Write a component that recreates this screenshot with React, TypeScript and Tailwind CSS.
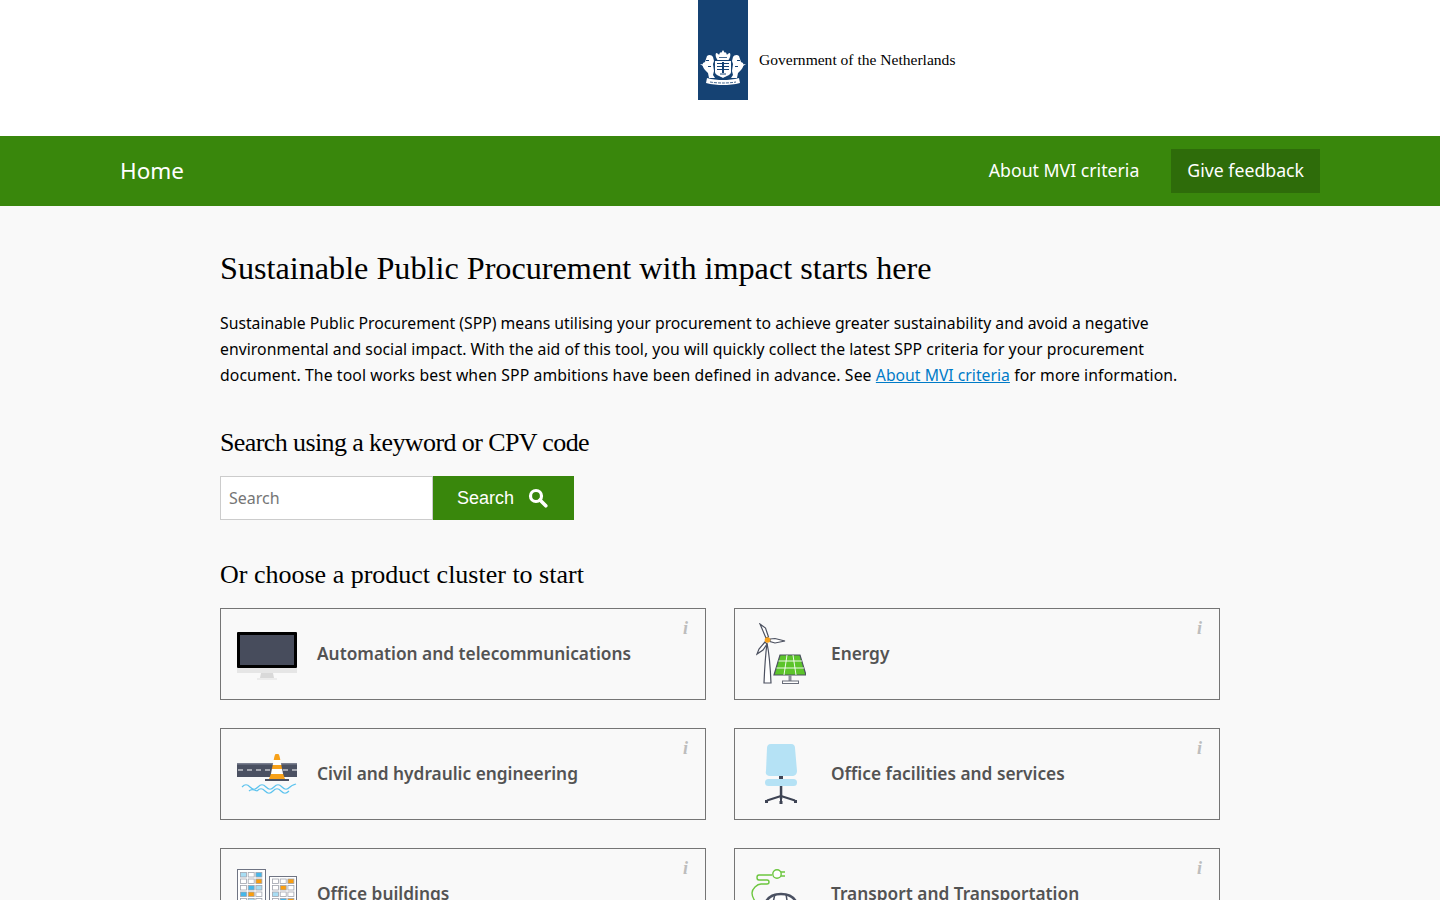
import React from 'react';

const sans = 'font-["Noto_Sans",sans-serif]';
const serif = 'font-["Liberation_Serif",serif]';

const Crest = () => (
  <svg width="46" height="36" viewBox="0 0 46 36" fill="#fff">
    {/* crown */}
    <path d="M16 4c1.500 0 2.500 1 3 2l1-2.500h1.500L23 1l1.500 2.500H26L27 6c.5-1 1.500-2 3-2 1 2 0 5-1.500 7h-11C16 9 15 6 16 4z" />
    <path d="M19 8.500h8" stroke="#154273" strokeWidth="0.8" />
    {/* shield */}
    <path d="M15 12h16v11c0 3-5 4-8 6-3-2-8-3-8-6z" />
    <path d="M17 14.500h5M24 14.500h5M17 17.500h5M24 17.500h5M17 20.500h5M24 20.500h5M20 25h6" stroke="#154273" strokeWidth="1" />
    <path d="M22 13h2v11h-2z" fill="#154273" />
    {/* lions */}
    <path d="M7 7c2-2 5-1 6 1l1 4-1 3 1 7-1 4 2 3H9l-1-5-3-3c-2-2-3-5-2-7l2-1 1-3z" />
    <path d="M39 7c-2-2-5-1-6 1l-1 4 1 3-1 7 1 4-2 3h6l1-5 3-3c2-2 3-5 2-7l-2-1-1-3z" />
    <path d="M0 15l4 .5-1 1.500zM46 15l-4 .5 1 1.500z" />
    <path d="M6 11h3v1H6zM37 11h3v1h-3zM8 17h3v1H8zM35 17h3v1h-3z" fill="#154273" />
    {/* ribbon */}
    <path d="M7 29c5 1.500 11 2 16 2s11-.5 16-2l1 5c-5 1.500-12 2-17 2s-12-.5-17-2z" />
    <path d="M10 33c4 .7 9 1 13 1s9-.3 13-1" fill="none" stroke="#154273" strokeWidth="0.8" strokeDasharray="3 1" />
  </svg>
);

const SearchGlyph = () => (
  <svg width="20" height="20" viewBox="0 0 20 20" fill="none" stroke="#fff">
    <circle cx="8" cy="8" r="5.500" strokeWidth="3.200" />
    <path d="M12 12l5.800 5.800" strokeWidth="3.600" strokeLinecap="round" />
  </svg>
);

const InfoMark = () => (
  <span className='absolute top-[9px] right-[17px] font-["Liberation_Serif",serif] italic font-bold text-[18px] leading-[20px] text-[#bdbdbd]'>i</span>
);

const ImacIcon = () => (
  <svg className="mt-1" width="60" height="48" viewBox="0 0 60 48">
    <rect x="0" y="0" width="60" height="36" rx="1" fill="#000" />
    <rect x="3" y="3" width="54" height="30" fill="#474c5c" />
    <rect x="0" y="36" width="60" height="5" fill="#e6e6e6" />
    <path d="M24 41h12l1 5H23z" fill="#d9d9d9" />
    <rect x="20" y="46" width="20" height="2" fill="#ececec" />
  </svg>
);

const EnergyIcon = () => (
  <svg width="50" height="62" viewBox="0 0 50 62">
    {/* turbine */}
    <path d="M11 20c-1.500 12-2.500 28-3 40h7c-.5-12-1.500-28-4-40z" fill="#fff" stroke="#4c5160" strokeWidth="1.200" />
    <path d="M10 15L4 1l5.500 4 3 9z" fill="#fff" stroke="#4c5160" strokeWidth="1.200" />
    <path d="M14 16l5-.5 10 2.500-10 2-5-1.500z" fill="#fff" stroke="#4c5160" strokeWidth="1.200" />
    <path d="M9 19l-6 7-2 5 6-4 4-6z" fill="#fff" stroke="#4c5160" strokeWidth="1.200" />
    <circle cx="11.500" cy="17" r="2.800" fill="#f7a11a" />
    {/* solar panel */}
    <path d="M24 32h20l6 20H18z" fill="#5cc42b" stroke="#4c5160" strokeWidth="1.200" />
    <path d="M31 32l-3 20M37 32l3 20M22.500 38h23.500M20.500 45h27.500" stroke="#fff" strokeWidth="0.9" fill="none" />
    <path d="M32.500 52h3v6h-3z" fill="#8a8e99" />
    <rect x="26.500" y="58" width="16" height="2.500" fill="#fff" stroke="#6a6e7a" strokeWidth="1" />
  </svg>
);

const RoadIcon = () => (
  <svg width="60" height="40" viewBox="0 0 60 40">
    <rect x="0" y="9" width="60" height="14" fill="#4b5162" />
    <rect x="0" y="9" width="60" height="1.500" fill="#7c8191" />
    <path d="M1 16h60" stroke="#fff" strokeWidth="1.200" strokeDasharray="5 4" />
    <path d="M38.500 0h3c.8 1 1.300 3 1.800 6h-6.600c.5-3 1-5 1.800-6z" fill="#f7a11a" />
    <path d="M36.700 6h6.600l1 5h-8.600z" fill="#fff" />
    <path d="M35.700 11h8.600l.8 4H34.900z" fill="#f7a11a" />
    <path d="M34.900 15h10.200l1 5H33.900z" fill="#fff" />
    <path d="M33.900 20h12.200l1.900 5H32z" fill="#f7a11a" />
    <rect x="28" y="25" width="24" height="2" fill="#4b5162" />
    <path d="M5 33c3-3 5-3 8 0s5 3 8 0 5-3 8 0 5 3 8 0 5-3 8 0 5 3 8 0 4-2 6-3" fill="none" stroke="#5cc3ee" strokeWidth="1.200" />
    <path d="M20 37c3-3 5-3 8 0s5 3 8 0 5-3 8 0 5 3 8 0" fill="none" stroke="#5cc3ee" strokeWidth="1.200" />
    <path d="M12 37c2-2 4-2 8 0" fill="none" stroke="#5cc3ee" strokeWidth="1.200" />
  </svg>
);

const ChairIcon = () => (
  <svg width="36" height="62" viewBox="0 0 36 62">
    <path d="M8 1h20c3 0 4 2 4 4l2 23c0 3-2 5-5 5H7c-3 0-5-2-4-5L4 5c0-2 1-4 4-4z" fill="#b5e2f5" />
    <rect x="16" y="33" width="4" height="3" fill="#3e4454" />
    <rect x="2" y="36" width="32" height="7" rx="3.500" fill="#b5e2f5" />
    <rect x="16.800" y="43" width="2.500" height="13" fill="#3e4454" />
    <path d="M18 53L4 57.500M18 53l14 4.500M18 53v6" stroke="#3e4454" strokeWidth="2" fill="none" />
    <rect x="2" y="57" width="3" height="3" fill="#3e4454" />
    <rect x="31" y="57" width="3" height="3" fill="#3e4454" />
    <rect x="16.500" y="58" width="3" height="3" fill="#3e4454" />
  </svg>
);

const windowColors = [
  ['#a8ddf3', '#fff', '#45b7ea'],
  ['#fff', '#fff', '#fa9e0f'],
  ['#fff', '#45b7ea', '#a8ddf3'],
  ['#45b7ea', '#fa9e0f', '#fff'],
  ['#fff', '#a8ddf3', '#fff'],
];

const windowColors2 = [
  ['#fff', '#fff', '#fa9e0f'],
  ['#fff', '#fa9e0f', '#fff'],
  ['#a8ddf3', '#fff', '#fff'],
  ['#fff', '#45b7ea', '#fa9e0f'],
];

const BuildingsIcon = () => (
  <svg className="mt-[12px]" width="60" height="62" viewBox="0 0 60 62">
    <rect x="0.500" y="0.500" width="28" height="60" fill="#fff" stroke="#6f7483" />
    {windowColors.map((row, r) =>
      row.map((c, i) => (
        <rect key={`a${r}${i}`} x={3.500 + i * 7.700} y={3.500 + r * 6.500} width="6" height="4.500" fill={c} stroke="#a0a4ad" strokeWidth="0.8" />
      ))
    )}
    <rect x="32.500" y="7.500" width="27" height="54" fill="#fff" stroke="#6f7483" />
    {windowColors2.map((row, r) =>
      row.map((c, i) => (
        <rect key={`b${r}${i}`} x={35.500 + i * 7.700} y={10 + r * 6.500} width="6" height="4.500" fill={c} stroke="#a0a4ad" strokeWidth="0.8" />
      ))
    )}
  </svg>
);

const CarIcon = () => (
  <svg width="60" height="62" viewBox="0 0 60 62">
    <path d="M21 12H8q-2 0-2 2.500t2 2.500h8q2 0 2 2t-2 2H10c-4 0-9 5-9 9s3 9 6 11" fill="none" stroke="#6cc63f" strokeWidth="1.400" />
    <circle cx="26" cy="11" r="4.200" fill="#fff" stroke="#6cc63f" strokeWidth="1.400" />
    <path d="M30 9h4M30 13h4" stroke="#6cc63f" strokeWidth="1.400" />
    <path d="M13 44C15 35 21 31 30 31s15 4 17 13z" fill="#fff" stroke="#4b5162" strokeWidth="2.500" />
    <path d="M24 31l-3 13M35 31l2 13" stroke="#4b5162" strokeWidth="1.500" />
  </svg>
);

const clusters: { title: string; icon: React.ReactNode }[] = [
  { title: 'Automation and telecommunications', icon: <ImacIcon /> },
  { title: 'Energy', icon: <EnergyIcon /> },
  { title: 'Civil and hydraulic engineering', icon: <RoadIcon /> },
  { title: 'Office facilities and services', icon: <ChairIcon /> },
  { title: 'Office buildings', icon: <BuildingsIcon /> },
  { title: 'Transport and Transportation', icon: <CarIcon /> },
];

const ClusterCard = ({ title, icon }: { title: string; icon: React.ReactNode }) => (
  <a className="relative flex h-[92px] items-center border border-[#757575] pl-4">
    <div className="flex w-[60px] justify-center">{icon}</div>
    <span className="ml-5 text-[17.300px] font-semibold leading-[24px] text-[#535353]">{title}</span>
    <InfoMark />
  </a>
);

export default function App() {
  return (
    <div className={`h-[900px] overflow-hidden bg-[#f9f9f9] text-black ${sans}`}>
      <header className="h-[136px] bg-white pl-[698px]">
        <div className="flex h-[100px]">
          <div className="flex h-[100px] w-[50px] items-end justify-center bg-[#154273] pb-[15px]">
            <Crest />
          </div>
          <span className={`ml-[11px] mt-[50px] text-[15.550px] leading-[20px] whitespace-nowrap ${serif}`}>Government of the Netherlands</span>
        </div>
      </header>

      <nav className="bg-[#39870c]">
        <div className="mx-auto flex h-[70px] w-[1200px] items-center justify-between">
          <a className="text-[22.500px] text-white">Home</a>
          <div className="flex items-center gap-8">
            <a className="pb-[2px] text-[17.700px] text-white">About MVI criteria</a>
            <a className="flex h-[44px] items-center bg-[#2e6c0a] px-4 pb-[2px] text-[17.700px] text-white">Give feedback</a>
          </div>
        </div>
      </nav>

      <main className="mx-auto w-[1000px] pt-[42px]">
        <h1 className={`text-[32.200px] leading-[40px] ${serif}`}>Sustainable Public Procurement with impact starts here</h1>
        <p className="mt-[22px] text-[15.750px] leading-[26px]">
          <span className="block">Sustainable Public Procurement (SPP) means utilising your procurement to achieve greater sustainability and avoid a negative</span>
          <span className="block tracking-[0.045px]">environmental and social impact. With the aid of this tool, you will quickly collect the latest SPP criteria for your procurement</span>
          <span className="block tracking-[0.11px]">
            document. The tool works best when SPP ambitions have been defined in advance. See{' '}
            <a className="tracking-normal text-[#007bc7] underline">About MVI criteria</a> for more information.
          </span>
        </p>

        <h2 className={`mt-[38px] text-[26px] leading-[34px] tracking-[-0.6px] ${serif}`}>Search using a keyword or CPV code</h2>
        <div className="mt-4 flex h-[44px]">
          <input
            placeholder="Search"
            className="h-full w-[213px] border border-[#ccc] bg-white px-2 text-[16px] outline-none placeholder:text-[#757575]"
          />
          <button className='flex h-full w-[141px] items-center justify-center gap-[14px] bg-[#39870c] pr-[2px] font-["Liberation_Sans",sans-serif] text-[18px] text-white'>
            Search
            <SearchGlyph />
          </button>
        </div>

        <h2 className={`mt-[38px] text-[26px] leading-[34px] ${serif}`}>Or choose a product cluster to start</h2>
        <div className="mt-4 grid grid-cols-2 gap-7">
          {clusters.map(c => (
            <ClusterCard key={c.title} title={c.title} icon={c.icon} />
          ))}
        </div>
      </main>
    </div>
  );
}
